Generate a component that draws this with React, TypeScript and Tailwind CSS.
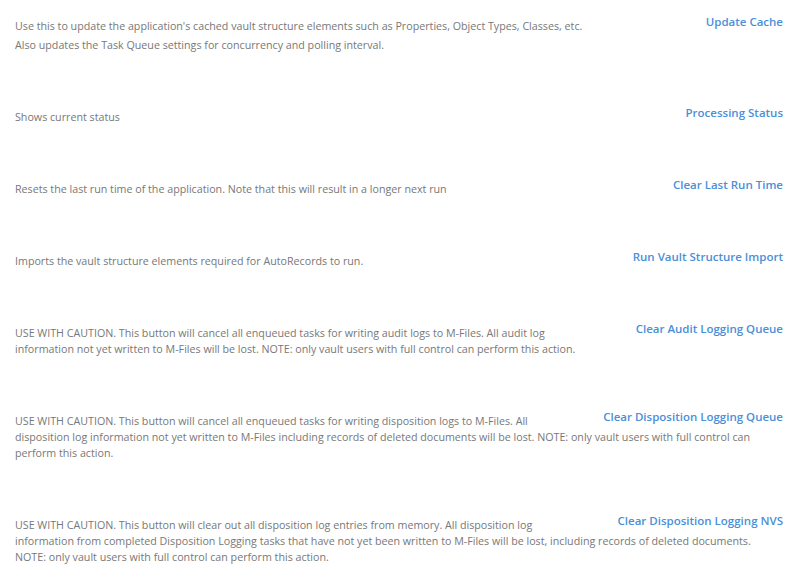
const rows = [
  {
    action: "Update Cache",
    text: [
      "Use this to update the application's cached vault structure elements such as Properties, Object Types, Classes, etc.",
      "Also updates the Task Queue settings for concurrency and polling interval.",
    ],
  },
  { action: "Processing Status", text: ["Shows current status"] },
  {
    action: "Clear Last Run Time",
    text: ["Resets the last run time of the application. Note that this will result in a longer next run"],
  },
  {
    action: "Run Vault Structure Import",
    text: ["Imports the vault structure elements required for AutoRecords to run."],
  },
  {
    action: "Clear Audit Logging Queue",
    text: [
      "USE WITH CAUTION. This button will cancel all enqueued tasks for writing audit logs to M-Files. All audit log information not yet written to M-Files will be lost. NOTE: only vault users with full control can perform this action.",
    ],
  },
  {
    action: "Clear Disposition Logging Queue",
    text: [
      "USE WITH CAUTION. This button will cancel all enqueued tasks for writing disposition logs to M-Files. All disposition log information not yet written to M-Files including records of deleted documents will be lost. NOTE: only vault users with full control can perform this action.",
    ],
  },
  {
    action: "Clear Disposition Logging NVS",
    text: [
      "USE WITH CAUTION. This button will clear out all disposition log entries from memory. All disposition log information from completed Disposition Logging tasks that have not yet been written to M-Files will be lost, including records of deleted documents. NOTE: only vault users with full control can perform this action.",
    ],
  },
];

export default function App() {
  return (
    <div
      className="min-h-[587px] bg-white pl-[15px] pr-[27px] pt-[14px] flex flex-col gap-[52px]"
      style={{ fontFamily: '"Open Sans", sans-serif' }}
    >
      {rows.map((row) => (
        <div key={row.action} className="flow-root">
          <button
            type="button"
            className="float-right ml-[40px] text-[11.5px] leading-4 font-semibold text-[#4a8fd8] cursor-pointer"
          >
            {row.action}
          </button>
          <div className="pt-1 text-[10.7px] leading-4 text-[#787878]">
            {row.text.map((t, i) => (
              <p key={i} className={i > 0 ? "mt-[3px]" : ""}>
                {t}
              </p>
            ))}
          </div>
        </div>
      ))}
    </div>
  );
}
